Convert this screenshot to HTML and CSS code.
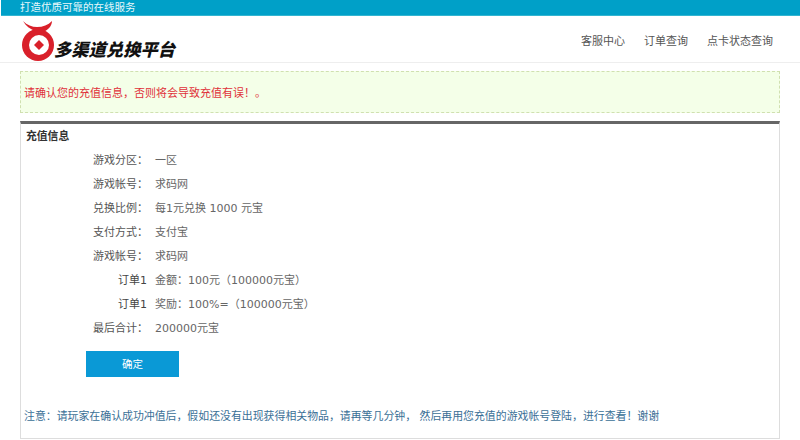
FILE: index.html
```html
<!DOCTYPE html>
<html lang="zh">
<head>
<meta charset="utf-8">
<title>多渠道兑换平台</title>
<link rel="stylesheet" href="styles.css">
</head>
<body>
<div class="topbar">打造优质可靠的在线服务</div>
<header class="header">
  <div class="logo">
    <svg class="logo-mark" width="36" height="42" viewBox="0 0 36 42">
      <circle cx="17" cy="25" r="16" fill="#d9202a"/>
      <path d="M21 9 C27 10 31 13 33 18" fill="none" stroke="#fff" stroke-width="1.200"/>
      <path d="M2 1 C6 5 11 7 16 7 C22 7 27 5 31 1 C31 6 27 10 22 12 C18 14 15 15 12 17 L8 12 C11 11 12 11 14 11 C9 9 5 6 2 1Z" fill="#d9202a"/>
      <circle cx="18" cy="25" r="10" fill="#fff"/>
      <path d="M18 20 L23 25 L18 30 L13 25Z" fill="#d9202a"/>
    </svg>
    <span class="logo-text">多渠道兑换平台</span>
  </div>
  <nav class="nav">
    <a>客服中心</a>
    <a>订单查询</a>
    <a>点卡状态查询</a>
  </nav>
</header>
<div class="notice">请确认您的充值信息，否则将会导致充值有误！。</div>
<section class="panel">
  <h2 class="panel-title">充值信息</h2>
  <dl class="rows">
    <div class="row"><dt>游戏分区：</dt><dd>一区</dd></div>
    <div class="row"><dt>游戏帐号：</dt><dd>求码网</dd></div>
    <div class="row"><dt>兑换比例：</dt><dd>每1元兑换 1000 元宝</dd></div>
    <div class="row"><dt>支付方式：</dt><dd>支付宝</dd></div>
    <div class="row"><dt>游戏帐号：</dt><dd>求码网</dd></div>
    <div class="row"><dt class="order">订单1</dt><dd>金额：100元（100000元宝）</dd></div>
    <div class="row"><dt class="order">订单1</dt><dd>奖励：100%=（100000元宝）</dd></div>
    <div class="row"><dt>最后合计：</dt><dd>200000元宝</dd></div>
  </dl>
  <button class="confirm">确定</button>
  <p class="note">注意：请玩家在确认成功冲值后，假如还没有出现获得相关物品，请再等几分钟， 然后再用您充值的游戏帐号登陆，进行查看！谢谢</p>
</section>
</body>
</html>
```
FILE: styles.css
```css
* { box-sizing: border-box; }
html, body { margin: 0; padding: 0; }
body {
  background: #fff;
  color: #444;
  font: 11px/16px "DejaVu Sans", "Noto Sans CJK SC", sans-serif;
  height: 440px;
  overflow: hidden;
}
.topbar {
  height: 16px;
  margin-left: 1px;
  padding-left: 19px;
  background: #00a0c8;
  border-bottom: 1px solid #33b5d0;
  color: #e8f8fb;
  font-size: 10.500px;
  line-height: 15px;
}
.header {
  height: 47px;
  display: flex;
  justify-content: space-between;
  border-bottom: 1px solid #eee;
  padding: 4px 27px 0 21px;
}
.logo { display: flex; align-items: flex-start; }
.logo-mark { flex: none; }
.logo-text {
  margin: 18px 0 0 -3px;
  font-family: "Noto Sans CJK SC", sans-serif;
  font-size: 17.300px;
  line-height: 22px;
  font-weight: 900;
  font-style: italic;
  color: #111;
  white-space: nowrap;
}
.nav { display: flex; gap: 19px; padding-top: 13px; }
.nav a { color: #555; font-size: 11px; line-height: 18px; }
.notice {
  margin: 8px 20px 0;
  height: 42px;
  padding: 14px 0 0 3px;
  background: #f4ffe8;
  border: 1px dashed #d0e0b0;
  color: #e0313a;
  font-size: 11px;
  line-height: 16px;
}
.panel {
  margin: 8px 20px 0;
  height: 318px;
  border: 1px solid #ddd;
  border-top: 3px solid #666;
  padding: 3px 4px 0 5px;
}
.panel-title {
  margin: 0;
  font-family: "Noto Sans CJK SC", sans-serif;
  font-size: 10.800px;
  line-height: 16px;
  font-weight: 700;
  color: #333;
}
.rows { margin: 10px 0 0; }
.row { display: flex; height: 24px; }
.row dt { width: 129px; text-align: right; padding-right: 7px; color: #555; }
.row dt.order { padding-right: 8px; color: #444; }
.row dd { margin: 0; padding-left: 0; color: #666; }
.confirm {
  display: block;
  width: 93px;
  height: 26px;
  margin: 6px 0 0 60px;
  border: 0;
  background: #0a99d6;
  color: #fff;
  font: 10.500px/16px "Noto Sans CJK SC", sans-serif;
}
.note {
  margin: 32px 0 0 -2px;
  color: #3a6f96;
  font-size: 10.900px;
  line-height: 16px;
  white-space: nowrap;
}
```
